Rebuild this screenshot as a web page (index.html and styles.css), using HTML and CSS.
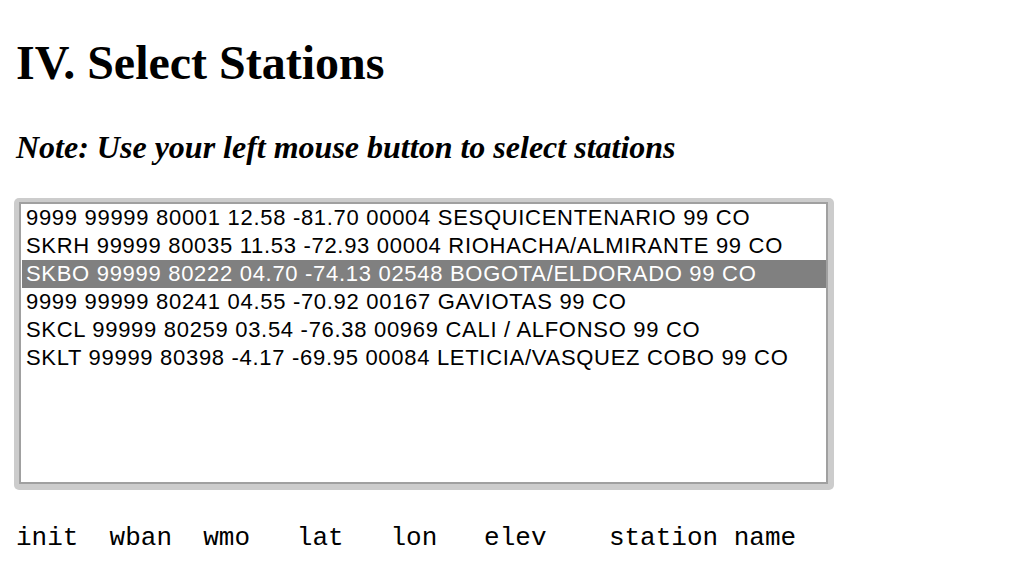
FILE: index.html
```html
<!DOCTYPE html>
<html>
<head>
<meta charset="utf-8">
<title>Select Stations</title>
<link rel="stylesheet" href="styles.css">
</head>
<body>
<h1 class="title">IV. Select Stations</h1>
<p class="note">Note: Use your left mouse button to select stations</p>
<div class="ring">
  <div class="list">
    <div class="row">9999 99999 80001 12.58 -81.70 00004 SESQUICENTENARIO 99 CO</div>
    <div class="row">SKRH 99999 80035 11.53 -72.93 00004 RIOHACHA/ALMIRANTE 99 CO</div>
    <div class="row selected">SKBO 99999 80222 04.70 -74.13 02548 BOGOTA/ELDORADO 99 CO</div>
    <div class="row">9999 99999 80241 04.55 -70.92 00167 GAVIOTAS 99 CO</div>
    <div class="row">SKCL 99999 80259 03.54 -76.38 00969 CALI / ALFONSO 99 CO</div>
    <div class="row">SKLT 99999 80398 -4.17 -69.95 00084 LETICIA/VASQUEZ COBO 99 CO</div>
  </div>
</div>
<pre class="legend">init  wban  wmo   lat   lon   elev    station name</pre>
</body>
</html>
```
FILE: styles.css
```css
html, body {
  margin: 0;
  padding: 0;
  background: #ffffff;
  color: #000000;
}
body {
  padding: 0 16px;
  font-family: "Liberation Serif", "Times New Roman", serif;
}
.title {
  margin: 35px 0 0 0;
  font-size: 48px;
  line-height: 56px;
  font-weight: bold;
}
.note {
  margin: 36px 0 0 0;
  font-size: 32px;
  line-height: 40px;
  font-weight: bold;
  font-style: italic;
}
.ring {
  margin: 31px 0 0 -2px;
  width: 809px;
  padding: 4px 6px 6px 5px;
  background: #cccccc;
  border-radius: 5px;
}
.list {
  height: 278px;
  border: 2px solid #a0a0a0;
  background: #ffffff;
  padding-left: 1px;
  font-family: "Liberation Sans", Arial, sans-serif;
  font-size: 22px;
  letter-spacing: 0.7px;
}
.row {
  height: 28px;
  line-height: 28px;
  padding-left: 4px;
  white-space: nowrap;
  color: #000000;
}
.row.selected {
  background: #808080;
  color: #ffffff;
}
.legend {
  margin: 33px 0 0 0;
  font-family: "Liberation Mono", "Courier New", monospace;
  font-size: 26px;
  line-height: 30px;
}
```
